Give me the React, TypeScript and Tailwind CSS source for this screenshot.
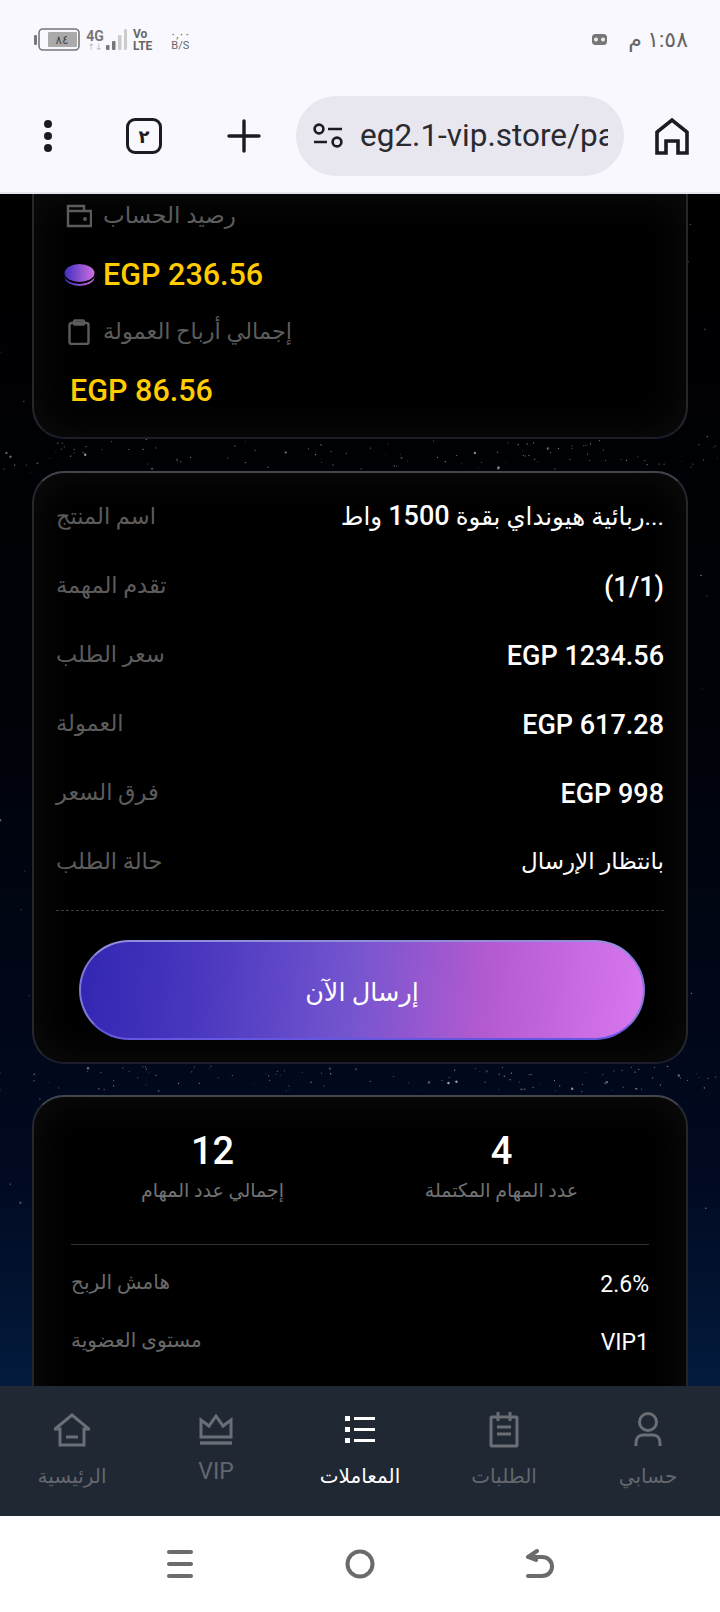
import React from "react";

const font = { fontFamily: "Roboto, 'Noto Sans', 'DejaVu Sans', sans-serif" };

// seeded star field for the page background
function makeStars() {
  let seed = 7;
  const rnd = () => {
    seed = (seed * 16807) % 2147483647;
    return seed / 2147483647;
  };
  const stars: { x: number; y: number; r: number; o: number }[] = [];
  for (let i = 0; i < 420; i++) {
    const band = i % 4;
    stars.push({
      x: rnd() * 720,
      y: band === 0 ? 872 + rnd() * 26 : band === 1 ? 246 + rnd() * 30 : rnd() * 1200,
      r: rnd() < 0.12 ? 1.2 : 0.6,
      o: 0.15 + rnd() * 0.5,
    });
  }
  return stars;
}
const stars = makeStars();

function StatusBar() {
  return (
    <div dir="ltr" className="h-[84px] flex items-start justify-between pt-[29px] pl-[34px] pr-[32px]">
      <div className="flex items-center h-[22px]">
        <svg width="46" height="24" viewBox="0 0 46 24" className="shrink-0">
          <rect x="0" y="7" width="3" height="10" rx="1" fill="#777" />
          <rect x="5" y="1" width="40" height="21" rx="4" fill="none" stroke="#777" strokeWidth="1.6" />
          <rect x="14" y="4" width="29" height="15" rx="1" fill="#aaa" />
          <text x="28" y="16" textAnchor="middle" fontSize="12" fill="#444" fontFamily="DejaVu Sans, sans-serif">٨٤</text>
        </svg>
        <div className="ml-[6px] w-[18px] flex flex-col items-center leading-none">
          <span className="text-[14px] font-bold text-[#777]">4G</span>
          <span className="text-[9px] text-[#bbb]">↑↓</span>
        </div>
        <svg width="22" height="22" viewBox="0 0 22 22" className="ml-[1px] shrink-0">
          <rect x="1" y="16" width="3.5" height="5" rx="1" fill="#777" />
          <rect x="7" y="12" width="3.5" height="9" rx="1" fill="#777" />
          <rect x="13" y="6" width="3.5" height="15" rx="1" fill="#ccc" />
          <rect x="19" y="0" width="3" height="21" rx="1" fill="#ccc" />
        </svg>
        <div className="ml-[6px] flex flex-col leading-none text-[12px] font-bold text-[#666]">
          <span>Vo</span>
          <span>LTE</span>
        </div>
        <div className="ml-[18px] flex flex-col items-center leading-none text-[11px] text-[#666]">
          <span>٠,٠٠</span>
          <span>B/S</span>
        </div>
      </div>
      <div className="flex items-center h-[22px] gap-[21px]">
        <svg width="15" height="12" viewBox="0 0 15 12">
          <rect x="0" y="0" width="15" height="11" rx="3.5" fill="#777" />
          <circle cx="4" cy="5.5" r="2" fill="#eee" />
          <circle cx="11" cy="5.5" r="2" fill="#eee" />
        </svg>
        <span dir="rtl" className="text-[22px] leading-none text-[#666]">١:٥٨ م</span>
      </div>
    </div>
  );
}

function BrowserBar() {
  return (
    <div dir="ltr" className="h-[110px] flex items-start border-b-2 border-[#e6e6ee]">
      <div className="w-[96px] h-[80px] mt-[12px] flex flex-col items-center justify-center gap-[4px]">
        <span className="w-2 h-2 rounded-full bg-[#1c1c20]" />
        <span className="w-2 h-2 rounded-full bg-[#1c1c20]" />
        <span className="w-2 h-2 rounded-full bg-[#1c1c20]" />
      </div>
      <div className="w-[96px] h-[80px] mt-[12px] flex items-center justify-center">
        <div className="w-[36px] h-[36px] rounded-[9px] border-[3.5px] border-[#1c1c20] flex items-center justify-center text-[18px] font-bold text-[#1c1c20]">
          ٢
        </div>
      </div>
      <div className="w-[104px] h-[80px] mt-[12px] flex items-center justify-center">
        <svg width="34" height="34" viewBox="0 0 34 34" stroke="#1c1c20" strokeWidth="3.4" strokeLinecap="round">
          <path d="M2 17h30M17 2v30" />
        </svg>
      </div>
      <div className="w-[328px] h-[80px] mt-[12px] rounded-full bg-[#e8e7f0] flex items-center pl-[17px] pr-[16px]">
        <svg width="30" height="26" viewBox="0 0 30 26" fill="none" stroke="#1c1c20" strokeWidth="2.6" className="shrink-0">
          <circle cx="6" cy="6" r="4.4" />
          <path d="M15 6h14M1 19h13" />
          <circle cx="24" cy="19" r="4.4" />
        </svg>
        <div className="ml-[17px] w-[248px] h-[40px] overflow-hidden whitespace-nowrap text-[31.5px] leading-[40px] text-[#2a2a30]">
          eg2.1-vip.store/pa
        </div>
      </div>
      <div className="w-[96px] h-[80px] mt-[12px] flex items-center justify-center">
        <svg width="34" height="38" viewBox="0 0 34 38" fill="none" stroke="#1c1c20" strokeWidth="3.6">
          <path d="M2 36V15L17 3l15 12v21h-9V24H11v12z" />
        </svg>
      </div>
    </div>
  );
}

function InfoRow({ label, children }: { label: string; children: React.ReactNode }) {
  return (
    <div className="h-[69px] flex items-center justify-between">
      {children}
      <span className="text-[22.5px] text-[#5c5c5c] pb-[6px]">{label}</span>
    </div>
  );
}

function Value({ children }: { children: React.ReactNode }) {
  return <span className="text-[27px] font-medium text-white pb-[2px]">{children}</span>;
}

function Card({ children, className }: { children: React.ReactNode; className: string }) {
  return (
    <div
      className={`mx-[32px] bg-black rounded-[32px] border-2 border-t-[#44454d] border-x-[#26272e] border-b-[#1c1e2c] shadow-[inset_0_0_44px_rgba(255,255,255,0.055)] ${className}`}
    >
      {children}
    </div>
  );
}

const navItems = [
  {
    label: "حسابي",
    labelClass: "mt-[11px] text-[20px] text-[#63676d]",
    icon: (
      <svg width="28" height="36" viewBox="0 0 28 36" fill="none" stroke="#6b6f75" strokeWidth="3">
        <circle cx="14" cy="10" r="8.5" />
        <path d="M2 34v-3c0-5 3-8 7-8h10c4 0 7 3 7 8v3" />
      </svg>
    ),
  },
  {
    label: "الطلبات",
    labelClass: "mt-[11px] text-[20px] text-[#63676d]",
    icon: (
      <svg width="30" height="36" viewBox="0 0 30 36" fill="none" stroke="#6b6f75" strokeWidth="3">
        <rect x="2" y="5" width="26" height="29" rx="1" />
        <path d="M9 0v9M21 0v9M8 15h14M8 22h14" />
      </svg>
    ),
  },
  {
    label: "المعاملات",
    labelClass: "mt-[11px] text-[20px] text-white",
    icon: (
      <svg width="32" height="30" viewBox="0 0 32 30" fill="#fff">
        <rect x="1" y="1" width="5" height="5" />
        <rect x="10" y="2" width="21" height="3" />
        <rect x="1" y="12" width="5" height="5" />
        <rect x="10" y="13" width="21" height="3" />
        <rect x="1" y="23" width="5" height="5" />
        <rect x="10" y="24" width="21" height="3" />
      </svg>
    ),
  },
  {
    label: "VIP",
    labelClass: "mt-[5px] text-[23px] text-[#63676d]",
    icon: (
      <svg width="34" height="32" viewBox="0 0 34 32" fill="none" stroke="#6b6f75" strokeWidth="3">
        <path d="M2 23V6l8 6 7-10 7 10 8-6v17z" />
        <path d="M1 29h32" strokeWidth="3.4" />
      </svg>
    ),
  },
  {
    label: "الرئيسية",
    labelClass: "mt-[11px] text-[20px] text-[#63676d]",
    icon: (
      <svg width="36" height="34" viewBox="0 0 36 34" fill="none" stroke="#6b6f75" strokeWidth="3">
        <path d="M1 16L18 2l17 14h-5v16H6V16z" />
        <path d="M12 24h12" />
      </svg>
    ),
  },
];

export default function App() {
  return (
    <div dir="rtl" className="w-[720px] h-[1612px] flex flex-col overflow-hidden bg-[#f9f8fe]" style={font}>
      <StatusBar />
      <BrowserBar />

      {/* scrolled page, first card is cut by the browser bar */}
      <main className="relative h-[1322px] overflow-hidden bg-[linear-gradient(180deg,#000_0%,#000208_40%,#010a22_75%,#04264e_100%)]">
        <svg width="720" height="1192" className="absolute inset-0">
          {stars.map((s, i) => (
            <circle key={i} cx={s.x} cy={s.y} r={s.r} fill="#fff" opacity={s.o} />
          ))}
        </svg>

        <div className="relative">
          <Card className="h-[245px] rounded-t-none border-t-0 px-[30px]">
            <div dir="ltr" className="flex flex-col">
              <div className="h-[44px] flex items-center gap-[11px] pl-[2px]">
                <svg width="26" height="24" viewBox="0 0 26 24" fill="none" stroke="#5c5c5c" strokeWidth="2.4">
                  <path d="M2 7V2h16v5M2 7h23v15H2z" />
                  <circle cx="19" cy="15" r="0.8" />
                </svg>
                <span dir="rtl" className="text-[23px] text-[#5c5c5c]">رصيد الحساب</span>
              </div>
              <div className="h-[70px] flex items-center gap-[8px] pt-[3px]">
                <svg width="31" height="24" viewBox="0 0 31 24">
                  <defs>
                    <linearGradient id="coin" x1="0" x2="1" y1="0" y2="0">
                      <stop offset="0" stopColor="#3f2fc0" />
                      <stop offset="1" stopColor="#d070e0" />
                    </linearGradient>
                  </defs>
                  <ellipse cx="15.5" cy="14" rx="15" ry="9" fill="url(#coin)" />
                  <ellipse cx="15.5" cy="11.5" rx="15.5" ry="9.5" fill="#000" />
                  <ellipse cx="15.5" cy="10" rx="15" ry="9" fill="url(#coin)" />
                </svg>
                <span className="text-[30.5px] font-medium text-[#ffcc00]">EGP 236.56</span>
              </div>
              <div className="h-[46px] flex items-center gap-[13px] pl-[4px] pt-[2px]">
                <svg width="22" height="26" viewBox="0 0 22 26" fill="none" stroke="#5c5c5c" strokeWidth="2.4">
                  <rect x="1.5" y="4" width="19" height="21" rx="2" />
                  <rect x="6" y="1.5" width="10" height="4" rx="1" />
                </svg>
                <span dir="rtl" className="text-[22.5px] text-[#5c5c5c]">إجمالي أرباح العمولة</span>
              </div>
              <div className="h-[72px] flex items-center pl-[6px] pt-[2px]">
                <span className="text-[30.5px] font-medium text-[#ffcc00]">EGP 86.56</span>
              </div>
            </div>
          </Card>

          <Card className="mt-[32px] h-[593px] px-[22px] pt-[12px]">
            <InfoRow label="اسم المنتج">
              <span className="text-[24.5px] text-white pb-[6px]">
                ...ربائية هيونداي بقوة <span className="text-[27px] font-medium">1500</span> واط
              </span>
            </InfoRow>
            <InfoRow label="تقدم المهمة"><Value>(1/1)</Value></InfoRow>
            <InfoRow label="سعر الطلب"><Value>EGP 1234.56</Value></InfoRow>
            <InfoRow label="العمولة"><Value>EGP 617.28</Value></InfoRow>
            <InfoRow label="فرق السعر"><Value>EGP 998</Value></InfoRow>
            <InfoRow label="حالة الطلب">
              <span className="text-[23px] text-white pb-[4px]">بانتظار الإرسال</span>
            </InfoRow>
            <div className="mt-[11px] border-t border-dashed border-[#3c3c3c]" />
            <button className="ml-[23px] mr-[19px] mt-[29px] pt-[4px] flex w-[566px] h-[100px] items-center justify-center rounded-full border-2 border-t-[#8f8fdc] border-b-[#6557e0] border-x-[#7d78d8] bg-[linear-gradient(95deg,#3226b2_0%,#4a38bf_22%,#7455cf_48%,#b45ad0_72%,#d877ef_100%)] text-[25.5px] text-white">
              إرسال الآن
            </button>
          </Card>

          <Card className="mt-[31px] h-[340px] px-[37px]">
            <div className="grid grid-cols-2 pt-[32px] h-[147px]">
              <div className="flex flex-col items-center pr-[6px]">
                <span className="text-[38px] leading-[44px] font-medium text-white">4</span>
                <span className="text-[19px] mt-[4px] text-[#737373]">عدد المهام المكتملة</span>
              </div>
              <div className="flex flex-col items-center pr-[6px]">
                <span className="text-[38px] leading-[44px] font-medium text-white">12</span>
                <span className="text-[19px] mt-[4px] text-[#737373]">إجمالي عدد المهام</span>
              </div>
            </div>
            <div className="border-t border-[#333]" />
            <div className="h-[68px] mt-[3px] flex items-center justify-between">
              <span className="text-[23px] text-white pt-[6px]">2.6%</span>
              <span className="text-[20px] text-[#6a6a6a]">هامش الربح</span>
            </div>
            <div className="h-[48px] flex items-center justify-between">
              <span className="text-[23px] text-white pt-[6px]">VIP1</span>
              <span className="text-[20px] text-[#6a6a6a]">مستوى العضوية</span>
            </div>
          </Card>
        </div>

        <nav className="absolute bottom-0 inset-x-0 h-[130px] bg-[#202834] grid grid-cols-5">
          {navItems.map((item) => (
            <div key={item.label} className="flex flex-col items-center pt-[24px]">
              <div className="h-[40px] flex items-center">{item.icon}</div>
              <span className={item.labelClass}>{item.label}</span>
            </div>
          ))}
        </nav>
      </main>

      {/* android nav buttons */}
      <div dir="ltr" className="h-[96px] bg-white grid grid-cols-3 items-center px-[90px]">
        <div className="flex justify-center">
          <svg width="28" height="30" viewBox="0 0 28 30" fill="#6b6b6b">
            <rect x="1" y="1" width="26" height="4" rx="2" />
            <rect x="1" y="13" width="26" height="4" rx="2" />
            <rect x="1" y="25" width="26" height="4" rx="2" />
          </svg>
        </div>
        <div className="flex justify-center">
          <svg width="30" height="30" viewBox="0 0 30 30" fill="none" stroke="#6b6b6b" strokeWidth="4">
            <circle cx="15" cy="15" r="12.5" />
          </svg>
        </div>
        <div className="flex justify-center">
          <svg width="30" height="30" viewBox="0 0 30 30" fill="none" stroke="#6b6b6b" strokeWidth="4" strokeLinecap="round" strokeLinejoin="round">
            <path d="M12 2L3 8L17 8C23 8 27 12 27 17.5C27 23 23 27 17 27L3 27M3 8L11 11" />
          </svg>
        </div>
      </div>
    </div>
  );
}
